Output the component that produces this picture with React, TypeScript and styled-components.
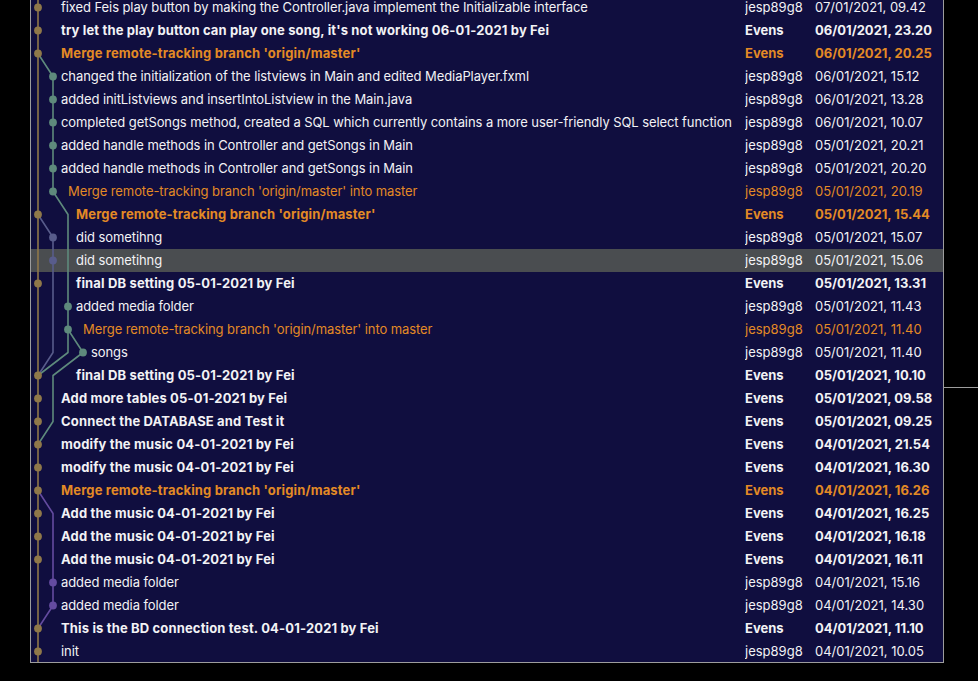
import React from "react";
import styled, { createGlobalStyle } from "styled-components";

const GlobalStyle = createGlobalStyle`
  html, body { margin: 0; padding: 0; background: #000; overflow: hidden; }
  body { font-family: Inter, "Noto Sans", "Liberation Sans", sans-serif; }
`;

type Tone = "normal" | "bold" | "merge" | "mergeBold";

interface Commit {
  msg: string;
  author: string;
  date: string;
  tone: Tone;
  indent: number;
}

const rows: Commit[] = [
  { msg: "fixed Feis play button by making the Controller.java implement the Initializable interface", author: "jesp89g8", date: "07/01/2021, 09.42", tone: "normal", indent: 61 },
  { msg: "try let the play button can play one song, it's not working 06-01-2021 by Fei", author: "Evens", date: "06/01/2021, 23.20", tone: "bold", indent: 61 },
  { msg: "Merge remote-tracking branch 'origin/master'", author: "Evens", date: "06/01/2021, 20.25", tone: "mergeBold", indent: 61 },
  { msg: "changed the initialization of the listviews in Main and edited MediaPlayer.fxml", author: "jesp89g8", date: "06/01/2021, 15.12", tone: "normal", indent: 61 },
  { msg: "added initListviews and insertIntoListview in the Main.java", author: "jesp89g8", date: "06/01/2021, 13.28", tone: "normal", indent: 61 },
  { msg: "completed getSongs method, created a SQL which currently contains a more user-friendly SQL select function", author: "jesp89g8", date: "06/01/2021, 10.07", tone: "normal", indent: 61 },
  { msg: "added handle methods in Controller and getSongs in Main", author: "jesp89g8", date: "05/01/2021, 20.21", tone: "normal", indent: 61 },
  { msg: "added handle methods in Controller and getSongs in Main", author: "jesp89g8", date: "05/01/2021, 20.20", tone: "normal", indent: 61 },
  { msg: "Merge remote-tracking branch 'origin/master' into master", author: "jesp89g8", date: "05/01/2021, 20.19", tone: "merge", indent: 68 },
  { msg: "Merge remote-tracking branch 'origin/master'", author: "Evens", date: "05/01/2021, 15.44", tone: "mergeBold", indent: 76 },
  { msg: "did sometihng", author: "jesp89g8", date: "05/01/2021, 15.07", tone: "normal", indent: 76 },
  { msg: "did sometihng", author: "jesp89g8", date: "05/01/2021, 15.06", tone: "normal", indent: 76 },
  { msg: "final DB setting 05-01-2021 by Fei", author: "Evens", date: "05/01/2021, 13.31", tone: "bold", indent: 76 },
  { msg: "added media folder", author: "jesp89g8", date: "05/01/2021, 11.43", tone: "normal", indent: 76 },
  { msg: "Merge remote-tracking branch 'origin/master' into master", author: "jesp89g8", date: "05/01/2021, 11.40", tone: "merge", indent: 83 },
  { msg: "songs", author: "jesp89g8", date: "05/01/2021, 11.40", tone: "normal", indent: 91 },
  { msg: "final DB setting 05-01-2021 by Fei", author: "Evens", date: "05/01/2021, 10.10", tone: "bold", indent: 76 },
  { msg: "Add more tables 05-01-2021 by Fei", author: "Evens", date: "05/01/2021, 09.58", tone: "bold", indent: 61 },
  { msg: "Connect the DATABASE and Test it", author: "Evens", date: "05/01/2021, 09.25", tone: "bold", indent: 61 },
  { msg: "modify the music 04-01-2021 by Fei", author: "Evens", date: "04/01/2021, 21.54", tone: "bold", indent: 61 },
  { msg: "modify the music 04-01-2021 by Fei", author: "Evens", date: "04/01/2021, 16.30", tone: "bold", indent: 61 },
  { msg: "Merge remote-tracking branch 'origin/master'", author: "Evens", date: "04/01/2021, 16.26", tone: "mergeBold", indent: 61 },
  { msg: "Add the music 04-01-2021 by Fei", author: "Evens", date: "04/01/2021, 16.25", tone: "bold", indent: 61 },
  { msg: "Add the music 04-01-2021 by Fei", author: "Evens", date: "04/01/2021, 16.18", tone: "bold", indent: 61 },
  { msg: "Add the music 04-01-2021 by Fei", author: "Evens", date: "04/01/2021, 16.11", tone: "bold", indent: 61 },
  { msg: "added media folder", author: "jesp89g8", date: "04/01/2021, 15.16", tone: "normal", indent: 61 },
  { msg: "added media folder", author: "jesp89g8", date: "04/01/2021, 14.30", tone: "normal", indent: 61 },
  { msg: "This is the BD connection test. 04-01-2021 by Fei", author: "Evens", date: "04/01/2021, 11.10", tone: "bold", indent: 61 },
  { msg: "init", author: "jesp89g8", date: "04/01/2021, 10.05", tone: "normal", indent: 61 },
];

const SELECTED = 11;
const ROW_H = 23;
const LEFT = 31;

const Screen = styled.div`
  display: flex;
  width: 978px;
  height: 681px;
  background: #000;
  overflow: hidden;
`;

const Gutter = styled.div`
  flex: none;
  width: 30px;
`;

const Panel = styled.div`
  flex: none;
  width: 912px;
  height: 662px;
  background: #100e3f;
  border-left: 1px solid #9d9d9d;
  border-right: 1px solid #9d9d9d;
  border-bottom: 1px solid #9d9d9d;
  overflow: hidden;
  position: relative;
`;

const List = styled.div`
  position: relative;
  margin-top: -4px;
`;

const SidePane = styled.div`
  flex: 1;
  display: flex;
  flex-direction: column;
`;

const SideTop = styled.div`
  height: 387px;
  border-bottom: 1px solid #9d9d9d;
`;

const Row = styled.div<{ $selected: boolean }>`
  display: flex;
  align-items: center;
  height: ${ROW_H}px;
  background: ${(p) => (p.$selected ? "#4a4d50" : "transparent")};
`;

const isBold = (t: Tone) => t === "bold" || t === "mergeBold";
const toneColor = (t: Tone) => (t === "merge" || t === "mergeBold" ? "#e38a25" : "#f2f2f5");

const Cell = styled.div<{ $tone: Tone }>`
  font-size: 13px;
  line-height: ${ROW_H}px;
  white-space: nowrap;
  overflow: hidden;
  color: ${(p) => toneColor(p.$tone)};
  font-weight: ${(p) => (isBold(p.$tone) ? 700 : 400)};
`;

const Message = styled(Cell)<{ $indent: number }>`
  flex: none;
  width: 714px;
  box-sizing: border-box;
  padding-left: ${(p) => p.$indent}px;
  padding-right: 2px;
  text-overflow: ellipsis;
  letter-spacing: ${(p) => (isBold(p.$tone) ? "0.15px" : "-0.08px")};
`;

const Author = styled(Cell)`
  flex: none;
  width: 70px;
`;

const DateCell = styled(Cell)`
  flex: 1;
`;

const Graph = styled.svg`
  position: absolute;
  left: 0;
  top: 0;
  pointer-events: none;
`;

const X = (l: number) => 7 + 15 * l;
const Y = (i: number) => 11.5 + ROW_H * i;

const GOLD = "#8f7849";
const TEAL = "#5e8a7c";
const SLATE = "#585c8b";
const PURPLE = "#644ba0";

const pts = (list: [number, number][]) => list.map(([l, i]) => `${X(l)},${Y(i)}`).join(" ");

const dots: { l: number; i: number; c: string }[] = [
  ...[0, 1, 2, 9, 12, 16, 17, 18, 19, 20, 21, 22, 23, 24, 27, 28].map((i) => ({ l: 0, i, c: GOLD })),
  ...[3, 4, 5, 6, 7, 8].map((i) => ({ l: 1, i, c: TEAL })),
  { l: 2, i: 13, c: TEAL },
  { l: 2, i: 14, c: TEAL },
  { l: 3, i: 15, c: TEAL },
  { l: 1, i: 10, c: SLATE },
  { l: 1, i: 11, c: SLATE },
  { l: 1, i: 25, c: PURPLE },
  { l: 1, i: 26, c: PURPLE },
];

const CommitGraph: React.FC = () => {
  const h = rows.length * ROW_H;
  return (
    <Graph width={80} height={h} viewBox={`0 0 80 ${h}`}>
      <g fill="none" strokeWidth={1.6} strokeLinejoin="round">
        <line x1={X(0)} y1={0} x2={X(0)} y2={h} stroke={GOLD} />
        <polyline stroke={TEAL} points={pts([[0, 2], [1, 3], [1, 8], [2, 9], [2, 15], [0, 16]])} />
        <polyline stroke={TEAL} points={pts([[2, 14], [3, 15], [1, 16], [1, 18], [0, 19]])} />
        <polyline stroke={SLATE} points={pts([[0, 9], [1, 10], [1, 15], [0, 16]])} />
        <polyline stroke={PURPLE} points={pts([[0, 21], [1, 22], [1, 26], [0, 27]])} />
      </g>
      {dots.map((d, k) => (
        <circle key={k} cx={X(d.l)} cy={Y(d.i)} r={3.9} fill={d.c} />
      ))}
    </Graph>
  );
};

export default function App() {
  return (
    <>
      <GlobalStyle />
      <Screen>
        <Gutter />
        <Panel>
          <List>
            {rows.map((r, i) => (
              <Row key={i} $selected={i === SELECTED}>
                <Message $tone={r.tone} $indent={r.indent - LEFT}>{r.msg}</Message>
                <Author $tone={r.tone}>{r.author}</Author>
                <DateCell $tone={r.tone}>{r.date}</DateCell>
              </Row>
            ))}
            <CommitGraph />
          </List>
        </Panel>
        <SidePane>
          <SideTop />
        </SidePane>
      </Screen>
    </>
  );
}
